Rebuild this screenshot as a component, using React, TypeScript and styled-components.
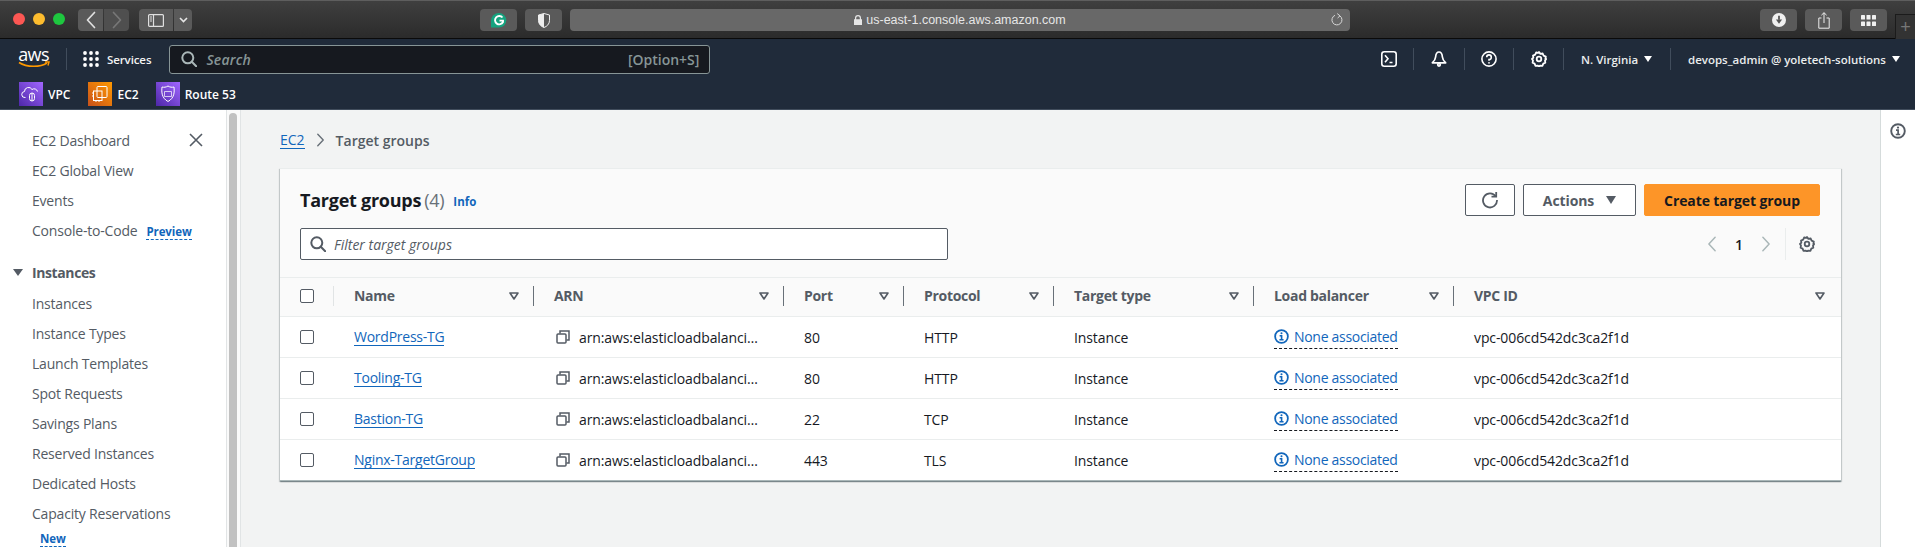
import React from "react";
import styled, { createGlobalStyle } from "styled-components";

const Global = createGlobalStyle`
  html, body { margin: 0; padding: 0; background: #fff; }
  body { font-family: "Open Sans", "Noto Sans", sans-serif; overflow: hidden; }
  * { box-sizing: border-box; }
`;

const Page = styled.div`
  width: 1915px; height: 547px; overflow: hidden; display: flex; flex-direction: column;
`;

/* Browser chrome */
const Chrome = styled.div`
  height: 39px; flex: none; display: flex; align-items: flex-start; padding: 9px 0 0 13px;
  background: linear-gradient(#3f3f3f, #2b2b2b); border-top: 1px solid #5e5e5e; border-bottom: 1px solid #0a0a0a;
`;
const Lights = styled.div`display: flex; gap: 8px; margin-top: 3px;`;
const Light = styled.span<{ $c: string }>`width: 12px; height: 12px; border-radius: 50%; background: ${p => p.$c};`;
const ChromeBtn = styled.div<{ $w: number; $ml?: number; $dim?: boolean; $r?: string }>`
  width: ${p => p.$w}px; height: 22px; margin-left: ${p => p.$ml ?? 0}px; flex: none;
  display: flex; align-items: center; justify-content: center; margin-top: -1px;
  background: ${p => (p.$dim ? "#4f4f4f" : "#5a5a5a")}; border-radius: ${p => p.$r ?? "4px"};
`;
const Address = styled.div`
  width: 780px; height: 22px; margin: -1px 0 0 8px; flex: none; position: relative;
  display: flex; align-items: center; justify-content: center; gap: 4px;
  background: #686868; border-radius: 4px; color: #e6e6e6;
  font: 400 12.5px "Liberation Sans", Arial, sans-serif;
`;
const Reload = styled.span`position: absolute; right: 6px; top: 4px; display: flex;`;
const NewTab = styled.div`
  width: 20px; height: 25px; margin: 4px 0 0 8px; border-left: 1px solid #1b1b1b; border-top: 1px solid #1b1b1b;
  background: #333; color: #777; font: 300 18px "Liberation Sans", sans-serif; display: flex; align-items: center; justify-content: center;
`;

/* Top nav */
const Nav = styled.header`
  height: 71px; flex: none; background: #202b3a; border-bottom: 1px solid #414d5c; display: flex; flex-direction: column; color: #fff;
`;
const NavTop = styled.div`height: 40px; display: flex; align-items: center; padding: 0 15px 0 18px; font-size: 12px; font-weight: 600;`;
const Logo = styled.svg`width: 32px; height: 38px; flex: none;`;
const NavDivider = styled.span<{ $mx?: number }>`width: 1px; height: 22px; background: #414d5c; flex: none; margin: 0 ${p => p.$mx ?? 0}px;`;
const Services = styled.div`display: flex; align-items: center; gap: 8px; margin-right: 18px; font-size: 11.5px; font-weight: 600; color: #f2f3f3; letter-spacing: -.1px;`;
const GlobalSearch = styled.div`
  width: 541px; height: 29px; flex: none; display: flex; align-items: center; padding: 0 10px 0 11px; gap: 9px;
  background: #16191f; border: 1px solid #879596; border-radius: 3px; font-size: 14px; color: #879596;
`;
const SearchHint = styled.i`flex: 1; font-style: italic; letter-spacing: .2px;`;
const Shortcut = styled.span`font-size: 14px;`;
const NavRight = styled.div`margin-left: auto; display: flex; align-items: center;`;
const NavCell = styled.div<{ $w: number }>`width: ${p => p.$w}px; display: flex; justify-content: center; align-items: center; flex: none;`;
const NavText = styled.div<{ $w: number }>`width: ${p => p.$w}px; padding-left: 17px; display: flex; align-items: center; gap: 6px; flex: none; white-space: nowrap; font-size: 11.5px; font-weight: 600; color: #eaeded;`;
const Caret = styled.span`width: 0; height: 0; border-left: 4px solid transparent; border-right: 4px solid transparent; border-top: 6px solid #fff; flex: none;`;
const NavBottom = styled.div`height: 30px; display: flex; align-items: flex-start; padding: 3px 0 0 19px;`;
const Fav = styled.div<{ $mr: number }>`display: flex; align-items: center; gap: 5px; margin-right: ${p => p.$mr}px; font-size: 12px; font-weight: 600; color: #fff;`;

/* Body */
const Body = styled.div`flex: 1; min-height: 0; display: flex; background: #f2f3f3;`;
const Sidebar = styled.nav`
  width: 227px; flex: none; background: #fff; padding: 15px 23px 0 32px; border-right: 1px solid #e1e4e5;
  font-size: 14px; color: #545b64; letter-spacing: -.2px;
`;
const SideRow = styled.div`height: 30px; display: flex; align-items: center; white-space: nowrap;`;
const CloseRow = styled(SideRow)`justify-content: space-between;`;
const Dash = styled.span`color: #1166bb; font-size: 11.5px; font-weight: 700; letter-spacing: -.1px; border-bottom: 1px dashed #1166bb; line-height: 15px; margin-left: 9px; margin-top: 3px;`;
const SideHead = styled.div`height: 30px; margin: 12px 0 1px -19px; display: flex; align-items: center; gap: 9px; font-weight: 700; color: #545b64; letter-spacing: -.4px;`;
const HeadCaret = styled.span`width: 0; height: 0; border-left: 5px solid transparent; border-right: 5px solid transparent; border-top: 7px solid #545b64;`;
const NewTag = styled(Dash)`display: inline-block; margin: 1px 0 0 8px;`;
const ScrollTrack = styled.div`width: 14px; flex: none; background: #fafafa; border-right: 1px solid #e1e4e5; padding: 3px 3px 0 2px;`;
const ScrollThumb = styled.div`height: 100%; width: 8px; border-radius: 4px 4px 0 0; background: #c1c1c1;`;
const Main = styled.main`flex: 1; min-width: 0; padding: 0 39px 0 39px;`;
const Crumbs = styled.div`height: 58px; padding-top: 2px; display: flex; align-items: center; font-size: 14px; color: #545b64; font-weight: 600;`;
const CrumbLink = styled.a`color: #1166bb; font-weight: 400; border-bottom: 1px solid #1166bb; line-height: 17px;`;
const CrumbSep = styled.span`margin: 0 11px; display: flex;`;
const Card = styled.section`background: #fff; box-shadow: 0 1px 1px rgba(0,28,36,.3), 1px 1px 1px rgba(0,28,36,.15), -1px 1px 1px rgba(0,28,36,.15);`;
const CardHead = styled.div`background: #fafafa; padding: 15px 21px 17px 20px; border-top: 1px solid #eaeded;`;
const TitleRow = styled.div`display: flex; align-items: center; height: 32px;`;
const Title = styled.h1`margin: 0; font-size: 18px; font-weight: 700; color: #16191f; letter-spacing: -.25px;`;
const Count = styled.span`font-weight: 400; color: #687078; margin-left: 3px;`;
const Info = styled.a`font-size: 11.5px; font-weight: 700; color: #1166bb; margin-left: 9px; margin-top: 3px;`;
const Actions = styled.div`margin-left: auto; display: flex; gap: 8px;`;
const Btn = styled.button<{ $w: number; $primary?: boolean }>`
  width: ${p => p.$w}px; height: 32px; border-radius: 2px; font: 700 14px "Open Sans", sans-serif; letter-spacing: -.1px; padding: 0;
  display: flex; align-items: center; justify-content: center; gap: 12px;
  background: ${p => (p.$primary ? "#fd9528" : "#fff")}; color: ${p => (p.$primary ? "#16191f" : "#545b64")};
  border: 1px solid ${p => (p.$primary ? "#fd9528" : "#545b64")};
`;
const BtnCaret = styled.span`width: 0; height: 0; border-left: 5px solid transparent; border-right: 5px solid transparent; border-top: 8px solid #545b64;`;
const FilterRow = styled.div`display: flex; align-items: center; height: 32px; margin-top: 12px;`;
const Filter = styled.div`
  width: 648px; height: 32px; background: #fff; border: 1px solid #545b64; border-radius: 2px; display: flex; align-items: center;
  padding-left: 9px; gap: 8px; font-style: italic; font-size: 14px; color: #545b64;
`;
const Pager = styled.div`margin-left: auto; margin-right: 5px; display: flex; align-items: center; font-size: 14px; font-weight: 600; color: #16191f;`;
const PageNum = styled.span`margin: 0 18px;`;
const PagerDivider = styled.span`width: 1px; height: 32px; background: #eaeded; margin: 0 13px 0 14px;`;

const COLS = "54px 200px 250px 120px 150px 200px 200px 1fr";
const HeadRow = styled.div`
  display: grid; grid-template-columns: ${COLS}; height: 40px; padding-bottom: 3px; background: #fafafa;
  border-top: 1px solid #eaeded; border-bottom: 1px solid #eaeded; font-size: 14px; font-weight: 700; color: #545b64; letter-spacing: -.3px;
`;
const HeadCell = styled.div`display: flex; align-items: center; padding-left: 20px; min-width: 0; white-space: nowrap;`;
const CheckCell = styled.div`display: flex; align-items: center; padding-left: 20px;`;
const CheckDivider = styled.span`width: 1px; height: 20px; background: #e1e4e5; margin-left: auto;`;
const SortBox = styled.span<{ $last?: boolean }>`margin-left: auto; display: flex; margin-right: ${p => (p.$last ? 16 : 14)}px;`;
const ColDivider = styled.span`width: 1px; height: 20px; background: #687078; flex: none;`;
const Check = styled.span`width: 14px; height: 14px; border: 1px solid #545b64; border-radius: 2px; background: #fff; flex: none;`;
const Row = styled.div<{ $last?: boolean }>`
  display: grid; grid-template-columns: ${COLS}; height: 41px; background: #fff; font-size: 14px; color: #16191f; letter-spacing: -.1px;
  border-bottom: 1px solid ${p => (p.$last ? "#aab7b8" : "#eaeded")};
`;
const Cell = styled.div`display: flex; align-items: center; padding-left: 20px; white-space: nowrap; min-width: 0;`;
const ArnCell = styled(Cell)`padding-left: 22px; gap: 9px;`;
const NameLink = styled.a`color: #1166bb; border-bottom: 1px solid #1166bb; line-height: 17px; letter-spacing: -.25px;`;
const Assoc = styled.a`display: flex; align-items: center; gap: 5px; color: #1166bb; border-bottom: 1px dashed #16191f; height: 24px; letter-spacing: -.3px;`;
const RightRail = styled.aside`width: 35px; flex: none; background: #fff; border-left: 1px solid #d5dbdb; display: flex; justify-content: center; padding-top: 13px;`;

const Chevron = ({ dir, color = "#e0e0e0", w = 10, h = 18, sw = 1.7 }: { dir: "l" | "r"; color?: string; w?: number; h?: number; sw?: number }) => (
  <svg width={w} height={h} viewBox="0 0 10 18" fill="none" stroke={color} strokeWidth={sw} strokeLinecap="round" strokeLinejoin="round">
    <path d={dir === "l" ? "M8.5 1.5 1.5 9l7 7.5" : "M1.5 1.5 8.5 9l-7 7.5"} />
  </svg>
);
const SearchIcon = ({ color }: { color: string }) => (
  <svg width="16" height="16" viewBox="0 0 16 16" fill="none" stroke={color} strokeWidth="2"><circle cx="6.8" cy="6.8" r="5.5" /><path d="m10.8 10.8 4.4 4.4" strokeLinecap="round" /></svg>
);
const Gear = ({ color, size = 16 }: { color: string; size?: number }) => (
  <svg width={size} height={size} viewBox="0 0 16 16" fill="none" stroke={color} strokeWidth="1.8" strokeLinejoin="round">
    <path d="M8 1l1.4 1.9 2.3-.4.9 2.2 2.2.9-.4 2.4L15.2 8 14 9.6l.3 2-2 1-.8 2.2-2.2-.2L8 15.5l-1.4-.9-2.2.2-.8-2.2-2-1 .4-2L1 8l1.4-1.4L2 4.6l2.2-.9.9-2.2 2.3.4z" />
    <circle cx="8" cy="8" r="2.3" />
  </svg>
);
const SortIcon = () => (
  <svg width="10" height="8" viewBox="0 0 10 8" fill="none" stroke="#545b64" strokeWidth="1.6" strokeLinejoin="round"><path d="M1 1h8L5 7z" /></svg>
);
const CopyIcon = () => (
  <svg width="14" height="14" viewBox="0 0 14 14" fill="none" stroke="#545b64" strokeWidth="1.5"><rect x="1" y="4" width="9" height="9" rx="1" /><path d="M4 3.6V1h9v9h-2.6" /></svg>
);
const InfoIcon = ({ color, size = 15 }: { color: string; size?: number }) => (
  <svg width={size} height={size} viewBox="0 0 16 16" fill="none" stroke={color}><circle cx="8" cy="8" r="6.8" strokeWidth="1.9" /><path d="M6 7.2h2.1v4.2M5.8 11.5h4.4" strokeWidth="1.7" /><circle cx="8" cy="4.6" r="1.1" fill={color} stroke="none" /></svg>
);

const rows = [
  ["WordPress-TG", "80", "HTTP"],
  ["Tooling-TG", "80", "HTTP"],
  ["Bastion-TG", "22", "TCP"],
  ["Nginx-TargetGroup", "443", "TLS"],
];
const sideItems = ["Instances", "Instance Types", "Launch Templates", "Spot Requests", "Savings Plans", "Reserved Instances", "Dedicated Hosts", "Capacity Reservations"];
const heads = ["Name", "ARN", "Port", "Protocol", "Target type", "Load balancer"];

const Tile = ({ id, from, to, children }: { id: string; from: string; to: string; children: React.ReactNode }) => (
  <svg width="24" height="24" viewBox="0 0 24 24" fill="none">
    <defs><linearGradient id={id} x1="0" y1="1" x2="1" y2="0"><stop offset="0" stopColor={from} /><stop offset="1" stopColor={to} /></linearGradient></defs>
    <rect width="24" height="24" fill={`url(#${id})`} />
    <g stroke="#fff" strokeWidth="1" fill="none">{children}</g>
  </svg>
);

export default function App() {
  return (
    <Page>
      <Global />
      <Chrome>
        <Lights>
          <Light $c="#fc5753" /><Light $c="#fdbc2e" /><Light $c="#1ec73f" />
        </Lights>
        <ChromeBtn $w={25} $ml={13} $r="4px 0 0 4px"><Chevron dir="l" /></ChromeBtn>
        <ChromeBtn $w={25} $ml={1} $dim $r="0 4px 4px 0"><Chevron dir="r" color="#777" /></ChromeBtn>
        <ChromeBtn $w={34} $ml={10} $r="4px 0 0 4px">
          <svg width="16" height="13" viewBox="0 0 16 13" fill="none" stroke="#e0e0e0" strokeWidth="1.2"><rect x=".6" y=".6" width="14.8" height="11.8" rx="1" /><path d="M5.5 .6v11.8M2 3h2M2 5h2M2 7h2" /></svg>
        </ChromeBtn>
        <ChromeBtn $w={18} $ml={1} $r="0 4px 4px 0">
          <svg width="9" height="6" viewBox="0 0 9 6" fill="none" stroke="#e6e6e6" strokeWidth="1.6"><path d="m1 1 3.5 3.5L8 1" /></svg>
        </ChromeBtn>
        <ChromeBtn $w={37} $ml={288}>
          <svg width="16" height="15" viewBox="0 0 16 15"><path d="M8 0a7.3 7.3 0 0 1 0 14.6H0V8a8 8 0 0 1 8-8z" fill="#15a37f" /><path d="M11.5 4.5A4.2 4.2 0 1 0 12 9V7.6H8.5" fill="none" stroke="#fff" strokeWidth="1.9" /></svg>
        </ChromeBtn>
        <ChromeBtn $w={37} $ml={8}>
          <svg width="12" height="15" viewBox="0 0 12 15"><path d="M6 .5 11.5 2v5.5c0 3.5-2.6 6-5.5 7-2.9-1-5.5-3.5-5.5-7V2z" fill="none" stroke="#eee" strokeWidth="1" /><path d="M6 .5.5 2v5.5c0 3.5 2.6 6 5.5 7z" fill="#eee" /></svg>
        </ChromeBtn>
        <Address>
          <svg width="8" height="10" viewBox="0 0 8 10" fill="#e6e6e6"><path d="M1 4.2V3a3 3 0 0 1 6 0v1.2h1V10H0V4.2zm1.2 0h3.6V3a1.8 1.8 0 0 0-3.6 0z" /></svg>
          us-east-1.console.aws.amazon.com
          <Reload>
            <svg width="14" height="14" viewBox="0 0 14 14" fill="none" stroke="#d8d8d8" strokeWidth="1"><path d="M9.8 2.8A5 5 0 1 1 5 2.3" /><path d="m7.2.6 2.8 2.2-2.4 2.2" /></svg>
          </Reload>
        </Address>
        <ChromeBtn $w={37} $ml={410}>
          <svg width="14" height="14" viewBox="0 0 14 14"><circle cx="7" cy="7" r="7" fill="#f0f0f0" /><path d="M7 2.8v4" stroke="#555" strokeWidth="1.8" /><path d="M3.9 6.4h6.2L7 10.8z" fill="#555" /></svg>
        </ChromeBtn>
        <ChromeBtn $w={37} $ml={8}>
          <svg width="12" height="17" viewBox="0 0 12 17" fill="none" stroke="#ececec" strokeWidth="1"><path d="M3.5 6H.8v10.2h10.4V6H8.5M6 11V.8M3.4 3.2 6 .7l2.6 2.5" /></svg>
        </ChromeBtn>
        <ChromeBtn $w={37} $ml={8}>
          <svg width="15" height="11" viewBox="0 0 15 11" fill="#f0f0f0"><rect width="4" height="4.5" rx=".6" /><rect x="5.5" width="4" height="4.5" rx=".6" /><rect x="11" width="4" height="4.5" rx=".6" /><rect y="6.5" width="4" height="4.5" rx=".6" /><rect x="5.5" y="6.5" width="4" height="4.5" rx=".6" /><rect x="11" y="6.5" width="4" height="4.5" rx=".6" /></svg>
        </ChromeBtn>
        <NewTab>+</NewTab>
      </Chrome>

      <Nav>
        <NavTop>
          <Logo viewBox="0 -9 32 38">
            <text x="15.5" y="11.5" textAnchor="middle" fontFamily="'Open Sans', sans-serif" fontSize="18" fontWeight="400" fill="#fff" letterSpacing="-.6">aws</text>
            <path d="M1 13.5c8 5 21 5 28 .5" fill="none" stroke="#f90" strokeWidth="1.6" />
            <path d="M27 13h4l-1 3.5" fill="none" stroke="#f90" strokeWidth="1.4" />
          </Logo>
          <NavDivider $mx={16} />
          <Services>
            <svg width="16" height="16" viewBox="0 0 16 16" fill="#fff">
              {[2, 8, 14].flatMap(y => [2, 8, 14].map(x => <circle key={`${x}-${y}`} cx={x} cy={y} r="1.9" />))}
            </svg>
            Services
          </Services>
          <GlobalSearch>
            <SearchIcon color="#aab7b8" />
            <SearchHint>Search</SearchHint>
            <Shortcut>[Option+S]</Shortcut>
          </GlobalSearch>
          <NavRight>
            <NavCell $w={49}>
              <svg width="16" height="16" viewBox="0 0 16 16" fill="none" stroke="#fff" strokeWidth="1.6"><rect x=".8" y=".8" width="14.4" height="14.4" rx="2.5" /><path d="m4 4.3 3 3.5-3 3.5M8.5 11.5h3" /></svg>
            </NavCell>
            <NavDivider />
            <NavCell $w={50}>
              <svg width="16" height="16" viewBox="0 0 16 16" fill="none" stroke="#fff" strokeWidth="1.7" strokeLinejoin="round"><path d="M8 1C5.5 1 4.8 3.5 4.6 6 4.4 8.5 3.3 10 1.3 11.8h13.4C12.7 10 11.6 8.5 11.4 6 11.2 3.5 10.5 1 8 1z" /><circle cx="8" cy="13.8" r="1.3" /></svg>
            </NavCell>
            <NavDivider />
            <NavCell $w={48}>
              <svg width="16" height="16" viewBox="0 0 16 16" fill="none" stroke="#fff" strokeWidth="1.6"><circle cx="8" cy="8" r="7.1" /><path d="M5.7 6.2A2.3 2.3 0 1 1 8 8.5v1.3" /><circle cx="8" cy="11.8" r=".9" fill="#fff" stroke="none" /></svg>
            </NavCell>
            <NavDivider />
            <NavCell $w={49}><Gear color="#fff" /></NavCell>
            <NavDivider />
            <NavText $w={106}>N. Virginia <Caret /></NavText>
            <NavDivider />
            <NavText $w={229}>devops_admin @ yoletech-solutions <Caret /></NavText>
          </NavRight>
        </NavTop>
        <NavBottom>
          <Fav $mr={18}>
            <Tile id="vpc" from="#4d27a8" to="#a166ff">
              <path d="M6.5 15.5H6a3 3 0 0 1-.5-6 4 4 0 0 1 7.5-2 3.5 3.5 0 0 1 5.5 2" />
              <rect x="10.5" y="11" width="5" height="8" rx="2.5" /><path d="M13 11v8" />
            </Tile>
            VPC
          </Fav>
          <Fav $mr={17}>
            <Tile id="ec2" from="#c8511b" to="#f90">
              <rect x="9" y="4.5" width="10" height="11" rx="1" /><rect x="5.5" y="9" width="8.5" height="9.5" /><path d="M4 11h1.5M4 14h1.5M8 18.5V20M11 18.5V20" />
            </Tile>
            EC2
          </Fav>
          <Fav $mr={0}>
            <Tile id="r53" from="#4d27a8" to="#a166ff">
              <path d="M12 4c2 1.3 4 1.5 6 1 .5 5 .5 11-6 14.5C5.500 16 5.500 10 6 5c2 .5 4 .3 6-1z" />
              <path d="M8.5 9.5h7v5h-7z" strokeWidth=".7" />
            </Tile>
            Route 53
          </Fav>
        </NavBottom>
      </Nav>

      <Body>
        <Sidebar>
          <CloseRow>
            EC2 Dashboard
            <svg width="14" height="14" viewBox="0 0 14 14" fill="none" stroke="#545b64" strokeWidth="1.6"><path d="m1 1 12 12M13 1 1 13" /></svg>
          </CloseRow>
          <SideRow>EC2 Global View</SideRow>
          <SideRow>Events</SideRow>
          <SideRow>Console-to-Code<Dash>Preview</Dash></SideRow>
          <SideHead><HeadCaret />Instances</SideHead>
          {sideItems.map(s => <SideRow key={s}>{s}</SideRow>)}
          <NewTag>New</NewTag>
        </Sidebar>
        <ScrollTrack><ScrollThumb /></ScrollTrack>
        <Main>
          <Crumbs>
            <CrumbLink>EC2</CrumbLink>
            <CrumbSep><Chevron dir="r" color="#687078" w={9} h={14} sw={1.8} /></CrumbSep>
            Target groups
          </Crumbs>
          <Card>
            <CardHead>
              <TitleRow>
                <Title>Target groups<Count>(4)</Count></Title>
                <Info>Info</Info>
                <Actions>
                  <Btn $w={50} aria-label="Refresh">
                    <svg width="18" height="18" viewBox="0 0 18 18" fill="none" stroke="#545b64" strokeWidth="1.8"><path d="M14.8 5.5A7 7 0 1 0 16 9" /><path d="M15.2 1v4.7h-4.7" /></svg>
                  </Btn>
                  <Btn $w={113}>Actions<BtnCaret /></Btn>
                  <Btn $w={176} $primary>Create target group</Btn>
                </Actions>
              </TitleRow>
              <FilterRow>
                <Filter><SearchIcon color="#545b64" />Filter target groups</Filter>
                <Pager>
                  <Chevron dir="l" color="#aab7b8" w={10} h={16} />
                  <PageNum>1</PageNum>
                  <Chevron dir="r" color="#aab7b8" w={10} h={16} />
                  <PagerDivider />
                  <Gear color="#545b64" />
                </Pager>
              </FilterRow>
            </CardHead>
            <HeadRow>
              <CheckCell><Check /><CheckDivider /></CheckCell>
              {heads.map(h => (
                <HeadCell key={h}>{h}<SortBox><SortIcon /></SortBox><ColDivider /></HeadCell>
              ))}
              <HeadCell>VPC ID<SortBox $last><SortIcon /></SortBox></HeadCell>
            </HeadRow>
            {rows.map(([name, port, proto], i) => (
              <Row key={name} $last={i === rows.length - 1}>
                <CheckCell><Check /></CheckCell>
                <Cell><NameLink>{name}</NameLink></Cell>
                <ArnCell><CopyIcon />arn:aws:elasticloadbalanci…</ArnCell>
                <Cell>{port}</Cell>
                <Cell>{proto}</Cell>
                <Cell>Instance</Cell>
                <Cell><Assoc><InfoIcon color="#1166bb" />None associated</Assoc></Cell>
                <Cell>vpc-006cd542dc3ca2f1d</Cell>
              </Row>
            ))}
          </Card>
        </Main>
        <RightRail><InfoIcon color="#545b64" size={16} /></RightRail>
      </Body>
    </Page>
  );
}
